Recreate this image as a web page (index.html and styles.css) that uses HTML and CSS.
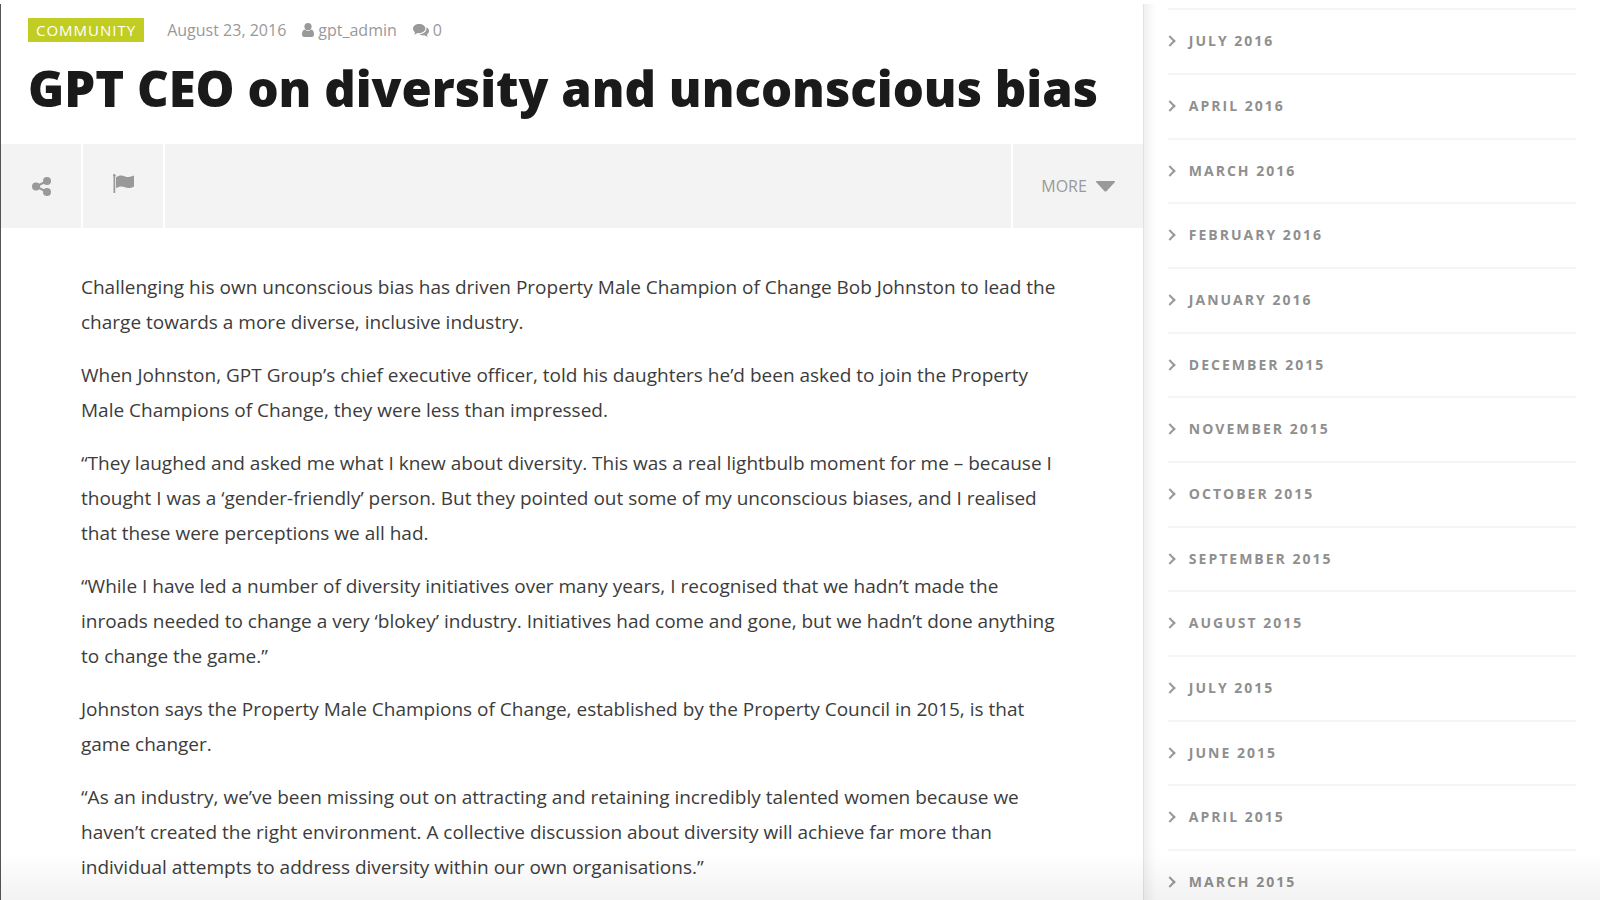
FILE: index.html
```html
<!DOCTYPE html>
<html lang="en">
<head>
<meta charset="utf-8">
<title>GPT CEO on diversity and unconscious bias</title>
<meta name="viewport" content="width=device-width, initial-scale=1">
<link rel="stylesheet" href="styles.css">
</head>
<body>
<div class="page">
  <main class="article">
    <header class="article-head">
      <div class="meta">
        <a class="category" href="#community">COMMUNITY</a>
        <time class="date" datetime="2016-08-23">August 23, 2016</time>
        <a class="meta-link author" href="#author">
          <svg class="icon-user" viewBox="0 0 12 14" aria-hidden="true"><circle cx="6" cy="3.6" r="3.6"/><path d="M2.9 6.6C1 6.8 0 8.700 0 11.500C0 13 .9 14 2.200 14h7.600C11.100 14 12 13 12 11.500C12 8.700 11 6.800 9.100 6.600C7.300 8.400 4.700 8.400 2.900 6.600z"/></svg>
          <span>gpt_admin</span>
        </a>
        <a class="meta-link" href="#comments">
          <svg class="icon-comments" viewBox="0 0 16 13" aria-hidden="true"><path d="M6.200 0C9.600 0 12.400 2 12.400 4.600S9.600 9.200 6.200 9.200c-.6 0-1.100 0-1.600-.1C3.500 9.900 2.300 10.400.9 10.500c.6-.6 1.100-1.300 1.200-2.200C.8 7.400 0 6.100 0 4.600C0 2 2.800 0 6.200 0z"/><path d="M13.400 3.300C15 4.100 16 5.400 16 6.900c0 1.400-.8 2.700-2.100 3.500c.1.900.6 1.600 1.200 2.200c-1.400-.1-2.600-.6-3.700-1.300c-1.700.3-3.800 0-5.100-1c4-.1 7.200-2.500 7.200-5.700c0-.4 0-.9-.1-1.300z"/></svg>
          <span>0</span>
        </a>
      </div>
      <h1 class="title">GPT CEO on diversity and unconscious bias</h1>
    </header>

    <div class="toolbar">
      <button class="tool" type="button" aria-label="Share">
        <svg class="icon-share" viewBox="0 0 19 19" aria-hidden="true"><path d="M15 4L4 9.500l11 5.500" fill="none" stroke="currentColor" stroke-width="2"/><circle cx="4" cy="9.500" r="4"/><circle cx="15" cy="4" r="4"/><circle cx="15" cy="15" r="4"/></svg>
      </button>
      <button class="tool tool-flag" type="button" aria-label="Flag">
        <svg class="icon-flag" viewBox="0 0 21 19" aria-hidden="true"><circle cx="1.300" cy="1.300" r="1.300"/><path d="M.5 1h1.700v18H.5z"/><path d="M3 3.200C6 1.200 9 .8 12 2.400c3 1.200 6 .8 9-.8v10.800c-3 1.700-6 2.200-9 .8c-3-1.200-6-1-9 1z"/></svg>
      </button>
      <button class="more" type="button">
        <span>MORE</span>
        <svg class="icon-caret" viewBox="0 0 19 11" aria-hidden="true"><path d="M1 0h17q1.500 0 .7 1.200L10.700 10q-1.200 1.200-2.400 0L.3 1.200Q-.5 0 1 0z"/></svg>
      </button>
    </div>

    <div class="body">
      <p>Challenging his own unconscious bias has driven Property Male Champion of Change Bob Johnston to lead the charge towards a more diverse, inclusive industry.</p>
      <p>When Johnston, GPT Group’s chief executive officer, told his daughters he’d been asked to join the Property Male Champions of Change, they were less than impressed.</p>
      <p>“They laughed and asked me what I knew about diversity. This was a real lightbulb moment for me – because I thought I was a ‘gender-friendly’ person. But they pointed out some of my unconscious biases, and I realised that these were perceptions we all had.</p>
      <p>“While I have led a number of diversity initiatives over many years, I recognised that we hadn’t made the inroads needed to change a very ‘blokey’ industry. Initiatives had come and gone, but we hadn’t done anything to change the game.”</p>
      <p>Johnston says the Property Male Champions of Change, established by the Property Council in 2015, is that game changer.</p>
      <p>“As an industry, we’ve been missing out on attracting and retaining incredibly talented women because we haven’t created the right environment. A collective discussion about diversity will achieve far more than individual attempts to address diversity within our own organisations.”</p>
    </div>
  </main>

  <aside class="sidebar">
    <ul class="archive">
      <li><a href="#2016-07">JULY 2016</a></li>
      <li><a href="#2016-04">APRIL 2016</a></li>
      <li><a href="#2016-03">MARCH 2016</a></li>
      <li><a href="#2016-02">FEBRUARY 2016</a></li>
      <li><a href="#2016-01">JANUARY 2016</a></li>
      <li><a href="#2015-12">DECEMBER 2015</a></li>
      <li><a href="#2015-11">NOVEMBER 2015</a></li>
      <li><a href="#2015-10">OCTOBER 2015</a></li>
      <li><a href="#2015-09">SEPTEMBER 2015</a></li>
      <li><a href="#2015-08">AUGUST 2015</a></li>
      <li><a href="#2015-07">JULY 2015</a></li>
      <li><a href="#2015-06">JUNE 2015</a></li>
      <li><a href="#2015-04">APRIL 2015</a></li>
      <li><a href="#2015-03">MARCH 2015</a></li>
    </ul>
  </aside>
</div>
</body>
</html>
```

FILE: styles.css
```css
* {
  box-sizing: border-box;
}

body {
  margin: 0;
  background: #fff;
  color: #3c3c3c;
  font-family: "Open Sans", "Noto Sans", sans-serif;
}

a {
  color: inherit;
  text-decoration: none;
}

svg {
  display: block;
  fill: currentColor;
}

.page {
  position: relative;
  display: grid;
  grid-template-columns: minmax(0, 5fr) minmax(0, 2fr);
  height: 100vh;
  padding-top: 4px;
  overflow: hidden;
}

/* Soft fade along the bottom edge of the window */
.page::after {
  content: "";
  position: absolute;
  inset: auto 0 0;
  height: 48px;
  background: linear-gradient(rgba(0, 0, 0, 0), rgba(0, 0, 0, 0.05));
  pointer-events: none;
}

.article {
  border-left: 1px solid #555;
}

.article-head {
  padding: 12px 27px 0;
}

.meta {
  display: flex;
  align-items: center;
  color: #999;
  font-size: 16px;
  line-height: 28px;
}

.category {
  margin-right: 23px;
  padding: 1px 8px 0;
  background: #c1cd23;
  color: #fff;
  font-size: 15px;
  line-height: 23px;
  letter-spacing: 1px;
}

.date {
  margin-right: 16px;
}

.meta-link {
  display: flex;
  align-items: center;
  gap: 4px;
}

.author {
  margin-right: 16px;
}

.icon-user {
  width: 12px;
  height: 14px;
}

.icon-comments {
  width: 16px;
  height: 13px;
}

.title {
  margin: 9px 0 21px;
  color: #1a1a1a;
  font-size: 49px;
  font-weight: 800;
  line-height: 70px;
}

.toolbar {
  display: flex;
  height: 84px;
  background: #f3f3f3;
}

.tool,
.more {
  display: flex;
  align-items: center;
  justify-content: center;
  padding: 0;
  border: 0 solid #fff;
  background: none;
  color: #999;
  font: inherit;
  font-size: 16px;
}

.tool {
  width: 82px;
  border-right-width: 2px;
}

.tool-flag {
  padding-bottom: 5px;
}

.icon-share {
  width: 19px;
  height: 19px;
}

.icon-flag {
  width: 21px;
  height: 19px;
}

.more {
  gap: 9px;
  margin-left: auto;
  padding: 0 28px;
  border-left-width: 2px;
}

.icon-caret {
  width: 19px;
  height: 11px;
}

.body {
  padding: 42px 80px 0;
  font-size: 19px;
  line-height: 35px;
}

.body p {
  margin: 0 0 18px;
}

.sidebar {
  padding: 4px 24px 0;
  border-left: 1px solid #e2e2e2;
  background: linear-gradient(90deg, #f0f0f0, #fff 12px);
}

.archive {
  margin: 0;
  padding: 0;
  list-style: none;
}

.archive li {
  padding: 20px 0 21px;
  border-top: 2px solid #f5f5f5;
}

.archive li:nth-child(3n) {
  padding-bottom: 20px;
}

.archive a {
  display: flex;
  align-items: center;
  gap: 15px;
  color: #8f8f8f;
  font-size: 14px;
  font-weight: 700;
  line-height: 22px;
  letter-spacing: 2px;
}

.archive a::before {
  content: "";
  width: 6px;
  height: 6px;
  margin-left: -2px;
  border: solid #999;
  border-width: 2px 2px 0 0;
  transform: rotate(45deg);
}
```
